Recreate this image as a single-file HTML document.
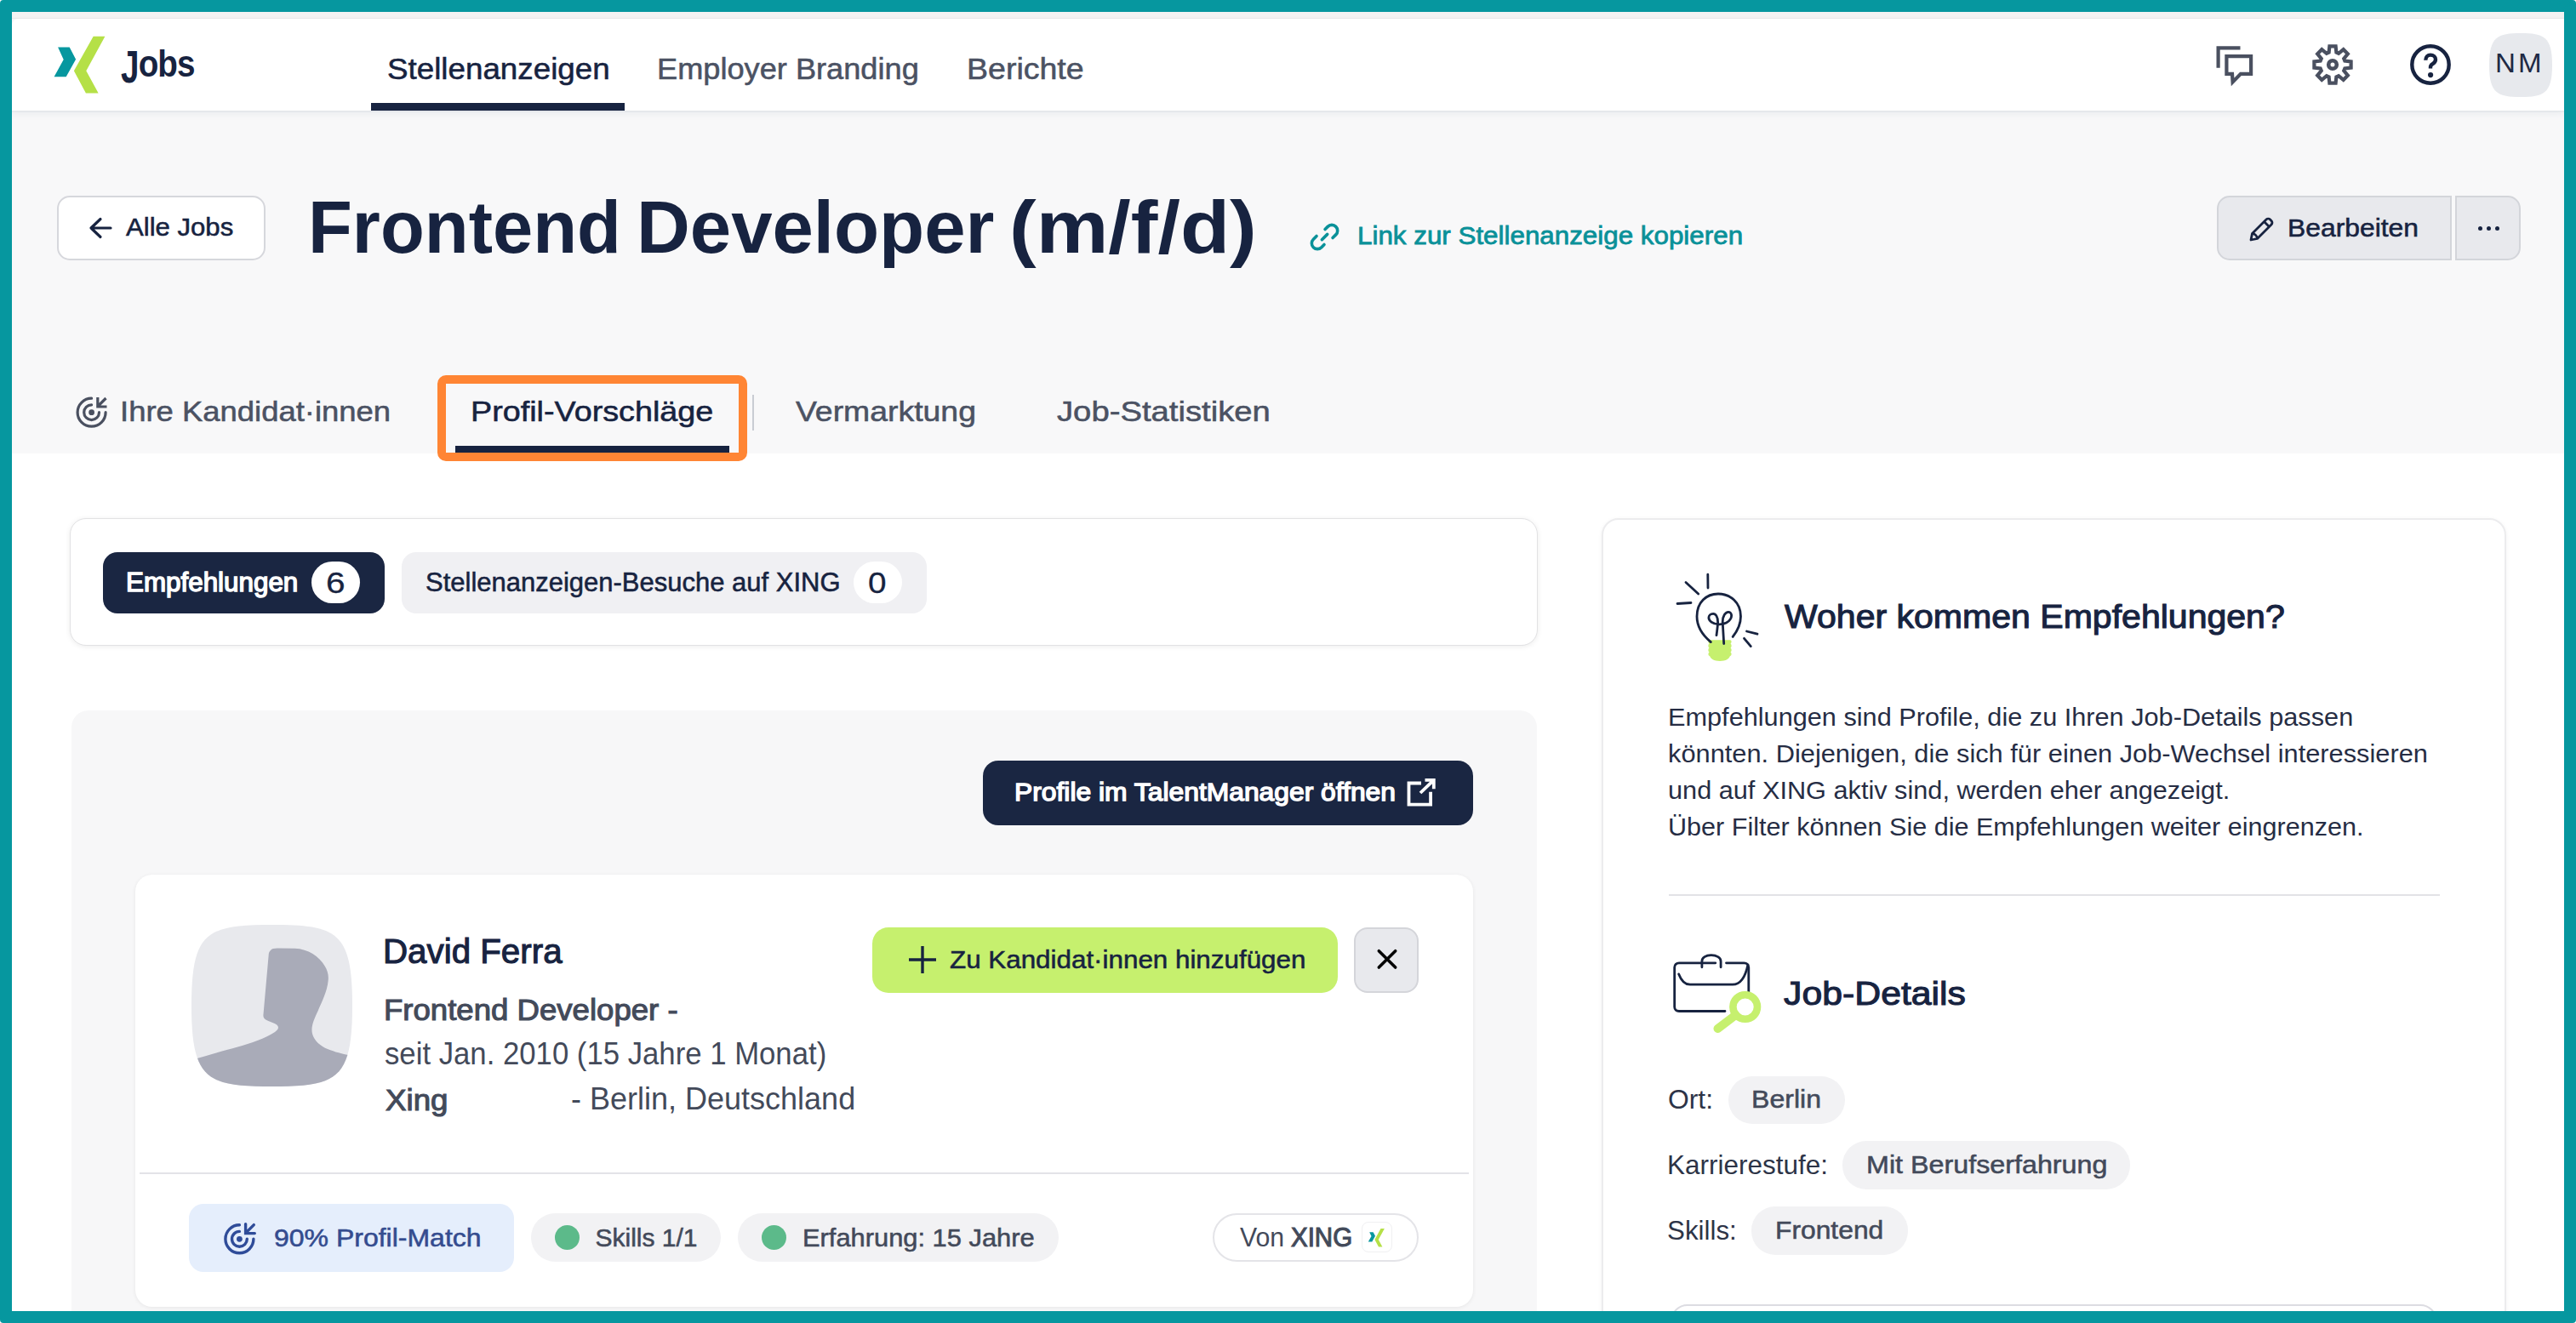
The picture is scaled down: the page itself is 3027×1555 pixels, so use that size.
<!DOCTYPE html>
<html><head><meta charset="utf-8">
<style>
html,body{margin:0;padding:0;}
body{width:3027px;height:1555px;position:relative;overflow:hidden;background:#000;font-family:"Liberation Sans",sans-serif;}
.a{position:absolute;box-sizing:border-box;}
.t{position:absolute;white-space:nowrap;line-height:1;font-family:"Liberation Sans",sans-serif;}
svg{position:absolute;overflow:visible;}
</style></head>
<body>
<!-- backgrounds -->
<div class="a" style="left:0;top:0;width:3027px;height:1555px;background:#ffffff;"></div>
<div class="a" style="left:0;top:0;width:3027px;height:533px;background:#f8f8f9;"></div>
<div class="a" style="left:0;top:14px;width:3027px;height:8px;background:#f3f3f3;border-bottom:1px solid #e9e9e9;"></div>
<div class="a" style="left:14px;top:22px;width:2999px;height:108px;background:#ffffff;border-top-left-radius:8px;box-shadow:0 2px 0 rgba(60,100,120,0.045), 0 4px 9px rgba(50,90,110,0.07);"></div>
<!-- nav underline -->
<div class="a" style="left:436px;top:121px;width:298px;height:9px;background:#172340;"></div>

<!-- logo -->
<svg style="left:0;top:0" width="200" height="130" viewBox="0 0 200 130">
<polygon points="68.1,55.6 81.7,55.6 89.1,69.7 77.7,90.3 63.6,90.3 74.7,70" fill="#06979f"/>
<polygon points="109.7,42.7 123.4,42.7 101.3,83.3 115.6,109.5 100.9,109.5 86.9,83.3" fill="#b5e047"/>
</svg>

<!-- header icons -->
<svg style="left:2590px;top:40px" width="60" height="70" viewBox="0 0 60 70" fill="none" stroke="#4a5060" stroke-width="4.2">
<path d="M16.6 39.8 V16.4 H42.5" stroke-linecap="butt"/>
<path d="M26.4 26.1 H55.1 V46.9 H43 L33.6 56.5 L33 46.9 H26.4 Z" stroke-linejoin="miter"/>
</svg>
<svg style="left:2717px;top:52px" width="48" height="48" viewBox="-24 -24 48 48" fill="none" stroke="#4a5060" stroke-width="4.2" stroke-linejoin="miter">
<path d="M-4.39 -14.34 L-3.61 -21.60 L3.61 -21.60 L4.39 -14.34 L7.04 -13.24 L12.72 -17.83 L17.83 -12.72 L13.24 -7.04 L14.34 -4.39 L21.60 -3.61 L21.60 3.61 L14.34 4.39 L13.24 7.04 L17.83 12.72 L12.72 17.83 L7.04 13.24 L4.39 14.34 L3.61 21.60 L-3.61 21.60 L-4.39 14.34 L-7.04 13.24 L-12.72 17.83 L-17.83 12.72 L-13.24 7.04 L-14.34 4.39 L-21.60 3.61 L-21.60 -3.61 L-14.34 -4.39 L-13.24 -7.04 L-17.83 -12.72 L-12.72 -17.83 L-7.04 -13.24 Z"/>
<circle cx="0" cy="0" r="4.8" stroke-width="4.6"/>
</svg>
<svg style="left:2832px;top:52px" width="48" height="48" viewBox="0 0 48 48" fill="none" stroke="#172340" stroke-width="4.4">
<circle cx="24" cy="24" r="21.7"/>
<path d="M18.3 18.8 C18.3 15 20.8 12.6 24 12.6 C27.4 12.6 30 15 30 18 C30 21 28 22.3 26.2 23.4 C24.8 24.3 24 25.2 24 27 V28.5"/>
<circle cx="24.1" cy="36.1" r="3.1" fill="#172340" stroke="none"/>
</svg>
<svg style="left:2925px;top:39px" width="74" height="75" viewBox="0 0 74 75"><path d="M37 0 C64 0 74 4 74 37.5 C74 71 64 75 37 75 C10 75 0 71 0 37.5 C0 4 10 0 37 0 Z" fill="#e7e9ed"/></svg>

<!-- Alle Jobs button -->
<div class="a" style="left:67px;top:230px;width:245px;height:76px;background:#fff;border:2px solid #d6d7dc;border-radius:15px;"></div>
<svg style="left:104px;top:254px" width="28" height="28" viewBox="0 0 28 28" fill="none" stroke="#172340" stroke-width="3.2" stroke-linecap="round" stroke-linejoin="round">
<path d="M26 14 H3 M14 3.5 L3 14 L14 24.5"/>
</svg>

<!-- link icon -->
<svg style="left:1537px;top:259px" width="38" height="38" viewBox="-0.5 -0.5 36 36" fill="none" stroke="#0a9199" stroke-width="3.4" stroke-linecap="round">
<path d="M15 21 L21 15"/>
<path d="M18.5 9.5 L21.5 6.5 C24 4 28 4 30.5 6.5 C33 9 33 13 30.5 15.5 L27 19"/>
<path d="M17.5 26.5 L14.5 29.5 C12 32 8 32 5.5 29.5 C3 27 3 23 5.5 20.5 L9 17"/>
</svg>

<!-- Bearbeiten button group -->
<div class="a" style="left:2605px;top:230px;width:276px;height:76px;background:#e8e9ed;border:2px solid #d3d5da;border-radius:15px 0 0 15px;"></div>
<div class="a" style="left:2885px;top:230px;width:77px;height:76px;background:#e8e9ed;border:2px solid #d3d5da;border-radius:0 15px 15px 0;"></div>
<svg style="left:2642px;top:253px" width="32" height="32" viewBox="0 0 32 32" fill="none" stroke="#172340" stroke-width="2.8" stroke-linejoin="round">
<path d="M3 29 L4.5 21.5 L21 5 C22.3 3.7 24.3 3.7 25.6 5 L27 6.4 C28.3 7.7 28.3 9.7 27 11 L10.5 27.5 Z"/>
<path d="M18.5 7.5 L24.5 13.5"/>
<path d="M4.5 21.5 C7.5 21.5 10.5 24.5 10.5 27.5"/>
</svg>
<div class="a" style="left:2911.5px;top:265.5px;width:5.5px;height:5.5px;border-radius:3px;background:#172340;"></div>
<div class="a" style="left:2921.5px;top:265.5px;width:5.5px;height:5.5px;border-radius:3px;background:#172340;"></div>
<div class="a" style="left:2931.5px;top:265.5px;width:5.5px;height:5.5px;border-radius:3px;background:#172340;"></div>

<!-- tabs -->
<svg style="left:80px;top:455px" width="60" height="60" viewBox="0 0 60 60" fill="none" stroke="#4a5060" stroke-width="3.2" stroke-linecap="round">
<path d="M27.6 13.2 A16.5 16.5 0 1 0 44.1 29.7"/>
<path d="M27.6 20.8 A8.9 8.9 0 1 0 36.5 29.7"/>
<circle cx="27.6" cy="29.7" r="3.4" fill="#4a5060" stroke="none"/>
<path d="M44.5 13 L35 22.5 M34.8 12 V23 H45.5" stroke-linecap="butt"/>
</svg>
<div class="a" style="left:535px;top:524px;width:322px;height:8px;background:#172340;"></div>
<div class="a" style="left:884px;top:464px;width:2px;height:42px;background:#c9ccd3;"></div>
<!-- orange highlight -->
<div class="a" style="left:514px;top:441px;width:364px;height:101px;border:10px solid #ff8534;border-radius:10px;z-index:20;"></div>

<!-- card 1 -->
<div class="a" style="left:82px;top:609px;width:1725px;height:150px;background:#fff;border:1px solid #e2e2e4;border-radius:19px;box-shadow:0 1px 6px rgba(0,0,0,0.08);"></div>
<div class="a" style="left:121px;top:649px;width:331px;height:72px;background:#1a2642;border-radius:17px;"></div>
<div class="a" style="left:366px;top:660px;width:57px;height:49px;background:#fff;border-radius:25px;"></div>
<div class="a" style="left:472px;top:649px;width:617px;height:72px;background:#f0f0f3;border-radius:17px;"></div>
<div class="a" style="left:1003px;top:660px;width:57px;height:49px;background:#fff;border-radius:25px;"></div>

<!-- gray container -->
<div class="a" style="left:84px;top:835px;width:1722px;height:800px;background:#f7f7f8;border-radius:20px;"></div>
<div class="a" style="left:1155px;top:894px;width:576px;height:76px;background:#1a2642;border-radius:18px;"></div>
<svg style="left:1652px;top:913px" width="38" height="38" viewBox="0 0 38 38" fill="none" stroke="#fff" stroke-width="3.8">
<path d="M18 7.5 H3.5 V32.7 H29.1 V17.8"/>
<path d="M22.5 3.9 H32.8 V14.3 M32.8 3.9 L17 19"/>
</svg>

<!-- profile card -->
<div class="a" style="left:159px;top:1028px;width:1572px;height:508px;background:#fff;border-radius:20px;box-shadow:0 1px 5px rgba(0,0,0,0.07);"></div>
<svg style="left:225px;top:1087px" width="189" height="190" viewBox="0 0 189 190">
<defs><clipPath id="avc"><path d="M94.5 0 C171 0 189 8 189 95 C189 182 171 190 94.5 190 C18 190 0 182 0 95 C0 8 18 0 94.5 0 Z"/></clipPath></defs>
<path d="M94.5 0 C171 0 189 8 189 95 C189 182 171 190 94.5 190 C18 190 0 182 0 95 C0 8 18 0 94.5 0 Z" fill="#e8e9ed"/>
<path clip-path="url(#avc)" d="M93 30 C94 28 97 27.6 101 27.5 L121.7 27.8 C137 28.5 150 37 156.7 48.6 C160 54 161.5 60 160.6 66 C159.5 78 153 91 148.7 101 C144 111 140 120 142 128 C144 136 152 143 160 146 C170 150 178 152 195 155 V200 H-5 V160.5 C20 153 40 147.5 53.5 143.8 C70 139 88 133 98 126 C103 122.5 103 119.5 99.5 117 C95 114.5 89 113 86 110.5 C84.5 109 84.2 107 84.5 105 L90.8 34 C91 32 92 31 93 30 Z" fill="#a9abb8"/>
</svg>
<div class="a" style="left:1025px;top:1090px;width:547px;height:77px;background:#c6f06e;border-radius:19px;"></div>
<svg style="left:1066px;top:1110px" width="36" height="36" viewBox="0 0 36 36" fill="none" stroke="#172340" stroke-width="3.4">
<path d="M18 2 V34 M2 18 H34"/>
</svg>
<div class="a" style="left:1591px;top:1090px;width:76px;height:77px;background:#e8e9ed;border:2px solid #d4d5da;border-radius:16px;"></div>
<svg style="left:1616px;top:1113px" width="30" height="30" viewBox="0 0 30 30" fill="none" stroke="#050505" stroke-width="3.6" stroke-linecap="round">
<path d="M4.3 4.7 L23.7 24.1 M23.7 4.7 L4.3 24.1"/>
</svg>
<div class="a" style="left:164px;top:1378px;width:1562px;height:1.5px;background:#e3e3e8;"></div>
<div class="a" style="left:222px;top:1415px;width:382px;height:80px;background:#e5eefc;border-radius:17px;"></div>
<svg style="left:256px;top:1431px" width="54" height="54" viewBox="0 0 54 54" fill="none" stroke="#2f4c99" stroke-width="3.4" stroke-linecap="round">
<path d="M25.4 8.8 A16.5 16.5 0 1 0 41.9 25.3"/>
<path d="M25.4 16.4 A8.9 8.9 0 1 0 34.3 25.3"/>
<circle cx="25.4" cy="25.3" r="3.4" fill="#2f4c99" stroke="none"/>
<path d="M42.3 8.6 L32.8 18.1 M32.6 7.6 V18.6 H43.3"/>
</svg>
<div class="a" style="left:624px;top:1426px;width:223px;height:57px;background:#f2f2f4;border-radius:29px;"></div>
<div class="a" style="left:652px;top:1440px;width:29px;height:29px;background:#5cba8a;border-radius:50%;"></div>
<div class="a" style="left:867px;top:1426px;width:377px;height:57px;background:#f2f2f4;border-radius:29px;"></div>
<div class="a" style="left:895px;top:1440px;width:29px;height:29px;background:#5cba8a;border-radius:50%;"></div>
<div class="a" style="left:1425px;top:1426px;width:242px;height:57px;background:#fff;border:2px solid #e4e4e8;border-radius:29px;"></div>
<div class="a" style="left:1600px;top:1436px;width:36px;height:36px;background:#fff;border:1px solid #f0f0f2;border-radius:8px;"></div>
<svg style="left:1604px;top:1440px" width="28" height="28" viewBox="0 0 28 28">
<polygon points="5.2,8.2 9.6,8.2 12,12.8 8.3,19.4 3.8,19.4 7.5,12.9" fill="#06979f"/>
<polygon points="18.5,4 22.9,4 15.8,17 20.4,25.4 16,25.4 11.4,17" fill="#b5e047"/>
</svg>

<!-- right panel -->
<div class="a" style="left:1882px;top:609px;width:1063px;height:1000px;background:#fff;border:2px solid #ececee;border-radius:20px;box-shadow:0 1px 5px rgba(0,0,0,0.05);"></div>
<svg style="left:1960px;top:665px" width="120" height="120" viewBox="0 0 120 120" fill="none" stroke="#172340" stroke-width="2.8" stroke-linecap="round">
<path d="M48.5 87.3 H73 C75 87.3 75 90.5 73.5 91.5 C75 92.5 75 95.5 73.5 96.5 C75 97.5 75 100.5 73.5 101.5 C75 102.5 75 105.5 73 106 C72 109 68 112 61 112 C54 112 50 109 49 106 C47 105.5 47 102.5 48.5 101.5 C47 100.5 47 97.5 48.5 96.5 C47 95.5 47 92.5 48.5 91.5 C47 90.5 47 87.3 48.5 87.3 Z" fill="#c6f06e" stroke="none"/>
<path d="M46.8 10.2 L47 26"/>
<path d="M21 19.5 L35.7 33"/>
<path d="M11 44.5 L27 43.5"/>
<path d="M92.5 77 L105 80.2"/>
<path d="M89.5 85.3 L97.3 94.6"/>
<path d="M50.3 89.6 C40 81 34 71 34 59.5 C34 43 45 33 59 33 C73 33 85.5 43 85.5 59.5 C85.5 69 82 76 76.2 83.4"/>
<path d="M57 81.7 C57.8 75 58.6 70 58.6 66 C58.6 60 56 56.3 53.2 56.3 C50 56.3 47.9 58.5 47.9 61 C47.9 64.5 52 68.5 60 68.8 C66 69 72 66 74 61.5 C75.5 57.5 74 54.4 71 54.4 C67.5 54.4 64.2 59 64.2 66 L65.7 91.5"/>

</svg>
<div class="a" style="left:1961px;top:1051px;width:906px;height:2px;background:#e2e2e6;"></div>
<svg style="left:1955px;top:1110px" width="120" height="120" viewBox="0 0 120 120" fill="none" stroke="#172340" stroke-width="2.8" stroke-linecap="round">
<path d="M60.8 21.8 H18 C15 21.8 12.7 24 12.7 27 V73.5 C12.7 76.5 15 78.5 18 78.5 H72"/>
<path d="M73.5 21.8 H94.5 C97.5 21.8 99.8 24 99.8 27 V58"/>
<path d="M44.9 26.8 V20 C44.9 15.5 49.5 12.7 55.8 12.7 C62 12.7 67.1 15.5 67.1 20 V26.8"/>
<path d="M17.7 34.9 C20 41 24 47.2 31 47.2 H81 C91 47.2 96 38 98.9 24"/>
<circle cx="95.7" cy="73.5" r="14.3" stroke="#c6f06e" stroke-width="8.6"/>
<path d="M84.5 83 L63.5 99" stroke="#c6f06e" stroke-width="10"/>
</svg>
<div class="a" style="left:2031px;top:1265px;width:137px;height:56px;background:#f2f2f4;border-radius:28px;"></div>
<div class="a" style="left:2165px;top:1341px;width:338px;height:57px;background:#f2f2f4;border-radius:28px;"></div>
<div class="a" style="left:2058px;top:1418px;width:184px;height:57px;background:#f2f2f4;border-radius:28px;"></div>
<div class="a" style="left:1963px;top:1533px;width:901px;height:60px;background:#fff;border:2px solid #dcdce2;border-radius:20px;"></div>

<div class='t' style='left:142.42px;top:52.90px;font-size:44px;font-weight:700;color:#172340;transform:scaleX(0.8784);transform-origin:0 0;letter-spacing:-1px;'><span style="display:inline-block;transform:scaleY(1.22);transform-origin:0 15%;">J</span>obs</div>
<div class='t' style='left:454.55px;top:62.75px;font-size:35px;font-weight:400;color:#172340;transform:scaleX(1.0504);transform-origin:0 0;-webkit-text-stroke:0.55px currentColor;'>Stellenanzeigen</div>
<div class='t' style='left:771.83px;top:62.65px;font-size:35px;font-weight:400;color:#4b5263;transform:scaleX(1.0340);transform-origin:0 0;-webkit-text-stroke:0.55px currentColor;'>Employer Branding</div>
<div class='t' style='left:1135.86px;top:62.65px;font-size:35px;font-weight:400;color:#4b5263;transform:scaleX(1.0720);transform-origin:0 0;-webkit-text-stroke:0.55px currentColor;'>Berichte</div>
<div class='t' style='left:2931.90px;top:58.73px;font-size:31.5px;font-weight:400;color:#1f2a45;transform:scaleX(1.0521);transform-origin:0 0;letter-spacing:3px;'>NM</div>
<div class='t' style='left:147.50px;top:253.35px;font-size:29px;font-weight:400;color:#172340;transform:scaleX(1.0726);transform-origin:0 0;-webkit-text-stroke:0.55px currentColor;'>Alle Jobs</div>
<div class='t' style='left:362.21px;top:223.20px;font-size:88px;font-weight:700;color:#172340;transform:scaleX(0.9649);transform-origin:0 0;'>Frontend</div>
<div class='t' style='left:748.07px;top:223.20px;font-size:88px;font-weight:700;color:#172340;transform:scaleX(0.9880);transform-origin:0 0;'>Developer</div>
<div class='t' style='left:1186.17px;top:223.20px;font-size:88px;font-weight:700;color:#172340;transform:scaleX(1.0816);transform-origin:0 0;'>(m/f/d)</div>
<div class='t' style='left:1594.61px;top:262.00px;font-size:30px;font-weight:400;color:#0a9199;transform:scaleX(1.0449);transform-origin:0 0;-webkit-text-stroke:0.8px currentColor;'>Link zur Stellenanzeige kopieren</div>
<div class='t' style='left:2687.84px;top:252.62px;font-size:29.5px;font-weight:400;color:#172340;transform:scaleX(1.0791);transform-origin:0 0;-webkit-text-stroke:0.55px currentColor;'>Bearbeiten</div>
<div class='t' style='left:140.78px;top:466.10px;font-size:34px;font-weight:400;color:#4b5263;transform:scaleX(1.0719);transform-origin:0 0;-webkit-text-stroke:0.55px currentColor;'>Ihre Kandidat·innen</div>
<div class='t' style='left:552.78px;top:466.10px;font-size:34px;font-weight:400;color:#172340;transform:scaleX(1.1102);transform-origin:0 0;-webkit-text-stroke:0.55px currentColor;'>Profil-Vorschläge</div>
<div class='t' style='left:934.70px;top:465.80px;font-size:34px;font-weight:400;color:#4b5263;transform:scaleX(1.0995);transform-origin:0 0;-webkit-text-stroke:0.55px currentColor;'>Vermarktung</div>
<div class='t' style='left:1241.80px;top:465.80px;font-size:34px;font-weight:400;color:#4b5263;transform:scaleX(1.1249);transform-origin:0 0;-webkit-text-stroke:0.55px currentColor;'>Job-Statistiken</div>
<div class='t' style='left:148.44px;top:669.08px;font-size:30.5px;font-weight:400;color:#ffffff;transform:scaleX(1.0284);transform-origin:0 0;-webkit-text-stroke:1.4px currentColor;'>Empfehlungen</div>
<div class='t' style='left:382.72px;top:667.83px;font-size:35.5px;font-weight:400;color:#172340;transform:scaleX(1.1412);transform-origin:0 0;-webkit-text-stroke:0.3px currentColor;'>6</div>
<div class='t' style='left:500.02px;top:669.23px;font-size:31.5px;font-weight:400;color:#172340;transform:scaleX(0.9838);transform-origin:0 0;-webkit-text-stroke:0.55px currentColor;'>Stellenanzeigen-Besuche auf XING</div>
<div class='t' style='left:1020.41px;top:667.83px;font-size:35.5px;font-weight:400;color:#172340;transform:scaleX(1.0889);transform-origin:0 0;-webkit-text-stroke:0.3px currentColor;'>0</div>
<div class='t' style='left:1191.58px;top:916.40px;font-size:30px;font-weight:400;color:#ffffff;transform:scaleX(1.0604);transform-origin:0 0;-webkit-text-stroke:1.4px currentColor;'>Profile im TalentManager öffnen</div>
<div class='t' style='left:450.28px;top:1097.80px;font-size:40px;font-weight:400;color:#172340;transform:scaleX(1.0077);transform-origin:0 0;-webkit-text-stroke:1.1px currentColor;'>David Ferra</div>
<div class='t' style='left:451.18px;top:1169.58px;font-size:34.5px;font-weight:400;color:#434a5a;transform:scaleX(1.0601);transform-origin:0 0;-webkit-text-stroke:1.1px currentColor;'>Frontend Developer -</div>
<div class='t' style='left:452.34px;top:1220.70px;font-size:36px;font-weight:400;color:#434a5a;transform:scaleX(0.9645);transform-origin:0 0;'>seit Jan. 2010 (15 Jahre 1 Monat)</div>
<div class='t' style='left:453.30px;top:1275.05px;font-size:35px;font-weight:400;color:#434a5a;transform:scaleX(1.0485);transform-origin:0 0;-webkit-text-stroke:1.1px currentColor;'>Xing</div>
<div class='t' style='left:671.00px;top:1274.20px;font-size:36px;font-weight:400;color:#434a5a;'>- Berlin, Deutschland</div>
<div class='t' style='left:1115.95px;top:1112.90px;font-size:30px;font-weight:400;color:#172340;transform:scaleX(1.0452);transform-origin:0 0;-webkit-text-stroke:0.55px currentColor;'>Zu Kandidat·innen hinzufügen</div>
<div class='t' style='left:322.23px;top:1440.00px;font-size:30px;font-weight:400;color:#344c8f;transform:scaleX(1.0664);transform-origin:0 0;-webkit-text-stroke:0.55px currentColor;'>90% Profil-Match</div>
<div class='t' style='left:699.50px;top:1440.00px;font-size:30px;font-weight:400;color:#434a5a;-webkit-text-stroke:0.55px currentColor;'>Skills 1/1</div>
<div class='t' style='left:942.94px;top:1439.50px;font-size:30px;font-weight:400;color:#434a5a;transform:scaleX(1.0282);transform-origin:0 0;-webkit-text-stroke:0.55px currentColor;'>Erfahrung: 15 Jahre</div>
<div class='t' style='left:1457.00px;top:1439.08px;font-size:30.5px;font-weight:400;color:#434a5a;transform:scaleX(0.9922);transform-origin:0 0;'>Von</div>
<div class='t' style='left:1517.40px;top:1439.08px;font-size:30.5px;font-weight:400;color:#434a5a;transform:scaleX(0.9671);transform-origin:0 0;-webkit-text-stroke:1.1px currentColor;'>XING</div>
<div class='t' style='left:2096.50px;top:704.92px;font-size:39.5px;font-weight:400;color:#172340;transform:scaleX(1.0389);transform-origin:0 0;-webkit-text-stroke:1.1px currentColor;'>Woher kommen Empfehlungen?</div>
<div class='t' style='left:1959.92px;top:828.42px;font-size:29.5px;font-weight:400;color:#262d44;transform:scaleX(1.0403);transform-origin:0 0;'>Empfehlungen sind Profile, die zu Ihren Job-Details passen</div>
<div class='t' style='left:1959.91px;top:871.32px;font-size:29.5px;font-weight:400;color:#262d44;transform:scaleX(1.0439);transform-origin:0 0;'>könnten. Diejenigen, die sich für einen Job-Wechsel interessieren</div>
<div class='t' style='left:1959.92px;top:914.22px;font-size:29.5px;font-weight:400;color:#262d44;transform:scaleX(1.0403);transform-origin:0 0;'>und auf XING aktiv sind, werden eher angezeigt.</div>
<div class='t' style='left:1959.93px;top:957.12px;font-size:29.5px;font-weight:400;color:#262d44;transform:scaleX(1.0364);transform-origin:0 0;'>Über Filter können Sie die Empfehlungen weiter eingrenzen.</div>
<div class='t' style='left:2095.60px;top:1148.02px;font-size:39.5px;font-weight:400;color:#172340;transform:scaleX(1.0832);transform-origin:0 0;-webkit-text-stroke:1.1px currentColor;'>Job-Details</div>
<div class='t' style='left:1959.96px;top:1276.98px;font-size:30.5px;font-weight:400;color:#2d3447;transform:scaleX(1.0426);transform-origin:0 0;'>Ort:</div>
<div class='t' style='left:2057.86px;top:1277.40px;font-size:30px;font-weight:400;color:#434a5a;transform:scaleX(1.0685);transform-origin:0 0;-webkit-text-stroke:0.55px currentColor;'>Berlin</div>
<div class='t' style='left:1958.94px;top:1353.78px;font-size:30.5px;font-weight:400;color:#2d3447;transform:scaleX(1.0320);transform-origin:0 0;'>Karrierestufe:</div>
<div class='t' style='left:2192.55px;top:1354.20px;font-size:30px;font-weight:400;color:#434a5a;transform:scaleX(1.0758);transform-origin:0 0;-webkit-text-stroke:0.55px currentColor;'>Mit Berufserfahrung</div>
<div class='t' style='left:1958.95px;top:1430.58px;font-size:30.5px;font-weight:400;color:#2d3447;transform:scaleX(1.0267);transform-origin:0 0;'>Skills:</div>
<div class='t' style='left:2085.88px;top:1431.00px;font-size:30px;font-weight:400;color:#434a5a;transform:scaleX(1.0598);transform-origin:0 0;-webkit-text-stroke:0.55px currentColor;'>Frontend</div>
<!-- frame -->
<div class="a" style="left:0;top:0;width:3027px;height:1555px;border:14px solid #06979f;border-radius:4px;z-index:50;"></div>
</body></html>
